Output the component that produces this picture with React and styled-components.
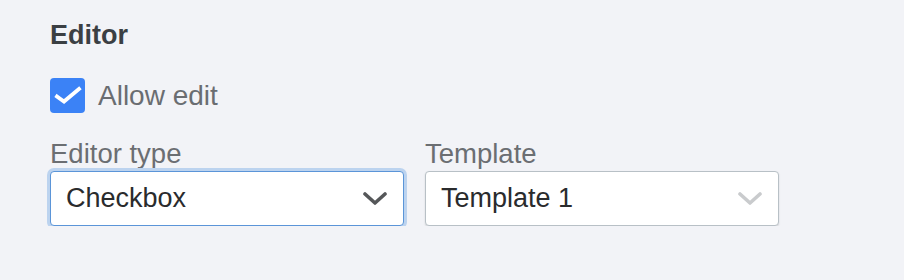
import styled, { createGlobalStyle } from "styled-components";

const GlobalStyle = createGlobalStyle`
  body {
    margin: 0;
    background-color: #f2f3f7;
    font-family: "Liberation Sans", Arial, sans-serif;
  }
`;

const fields = [
  { label: "Editor type", value: "Checkbox", focused: true },
  { label: "Template", value: "Template 1", focused: false },
];

const Chevron = ({ color }) => (
  <svg width="24" height="14" viewBox="0 0 24 14" fill="none">
    <path
      d="M2 2 L12 11 L22 2"
      stroke={color}
      strokeWidth="3.6"
      strokeLinecap="round"
      strokeLinejoin="round"
    />
  </svg>
);

const App = () => {
  return (
    <>
      <GlobalStyle />
      <SectionC>
        <TitleC>Editor</TitleC>
        <CheckRowC>
          <CheckBoxC>
            <svg width="35" height="35" viewBox="0 0 35 35" fill="none">
              <path
                d="M7 18.5 L14 23.5 L29 11"
                stroke="#fff"
                strokeWidth="3.8"
                strokeLinecap="square"
              />
            </svg>
          </CheckBoxC>
          <CheckLabelC>Allow edit</CheckLabelC>
        </CheckRowC>
        <FieldsC>
          {fields.map(({ label, value, focused }) => (
            <FieldC key={label}>
              <LabelC>{label}</LabelC>
              <SelectC focused={focused}>
                <span>{value}</span>
                <Chevron color={focused ? "#555759" : "#c9cbcd"} />
              </SelectC>
            </FieldC>
          ))}
        </FieldsC>
      </SectionC>
    </>
  );
};

export default App;

const SectionC = styled.section`
  padding: 20px 0 0 50px;
`;

const TitleC = styled.h3`
  margin: 0;
  font-size: 27px;
  line-height: 30px;
  font-weight: 700;
  color: #3b3f43;
`;

const CheckRowC = styled.div`
  display: flex;
  align-items: center;
  gap: 13px;
  margin-top: 28px;
`;

const CheckBoxC = styled.div`
  width: 35px;
  height: 35px;
  border-radius: 4px;
  background-color: #3b82f6;
  display: flex;
`;

const CheckLabelC = styled.span`
  font-size: 28px;
  line-height: 35px;
  color: #6a6d71;
`;

const FieldsC = styled.div`
  display: flex;
  gap: 21px;
  margin-top: 26px;
`;

const FieldC = styled.div`
  width: 354px;
  display: flex;
  flex-direction: column;
`;

const LabelC = styled.label`
  font-size: 27.5px;
  line-height: 30px;
  color: #6b6e72;
  margin-bottom: 2px;
`;

const SelectC = styled.div.withConfig({
  shouldForwardProp: (p) => p !== "focused",
})`
  height: 55px;
  box-sizing: border-box;
  display: flex;
  align-items: center;
  justify-content: space-between;
  padding: 0 16px 0 15px;
  background-color: #fff;
  border-radius: 4px;
  font-size: 27px;
  color: #2a2b2d;
  border: ${({ focused }) =>
    focused ? "1.5px solid #5b95d8" : "1px solid #b8c0c6"};
  box-shadow: ${({ focused }) =>
    focused ? "0 0 0 3px #bcd3ef" : "0 1px 2px rgba(0, 0, 0, 0.12)"};
`;
